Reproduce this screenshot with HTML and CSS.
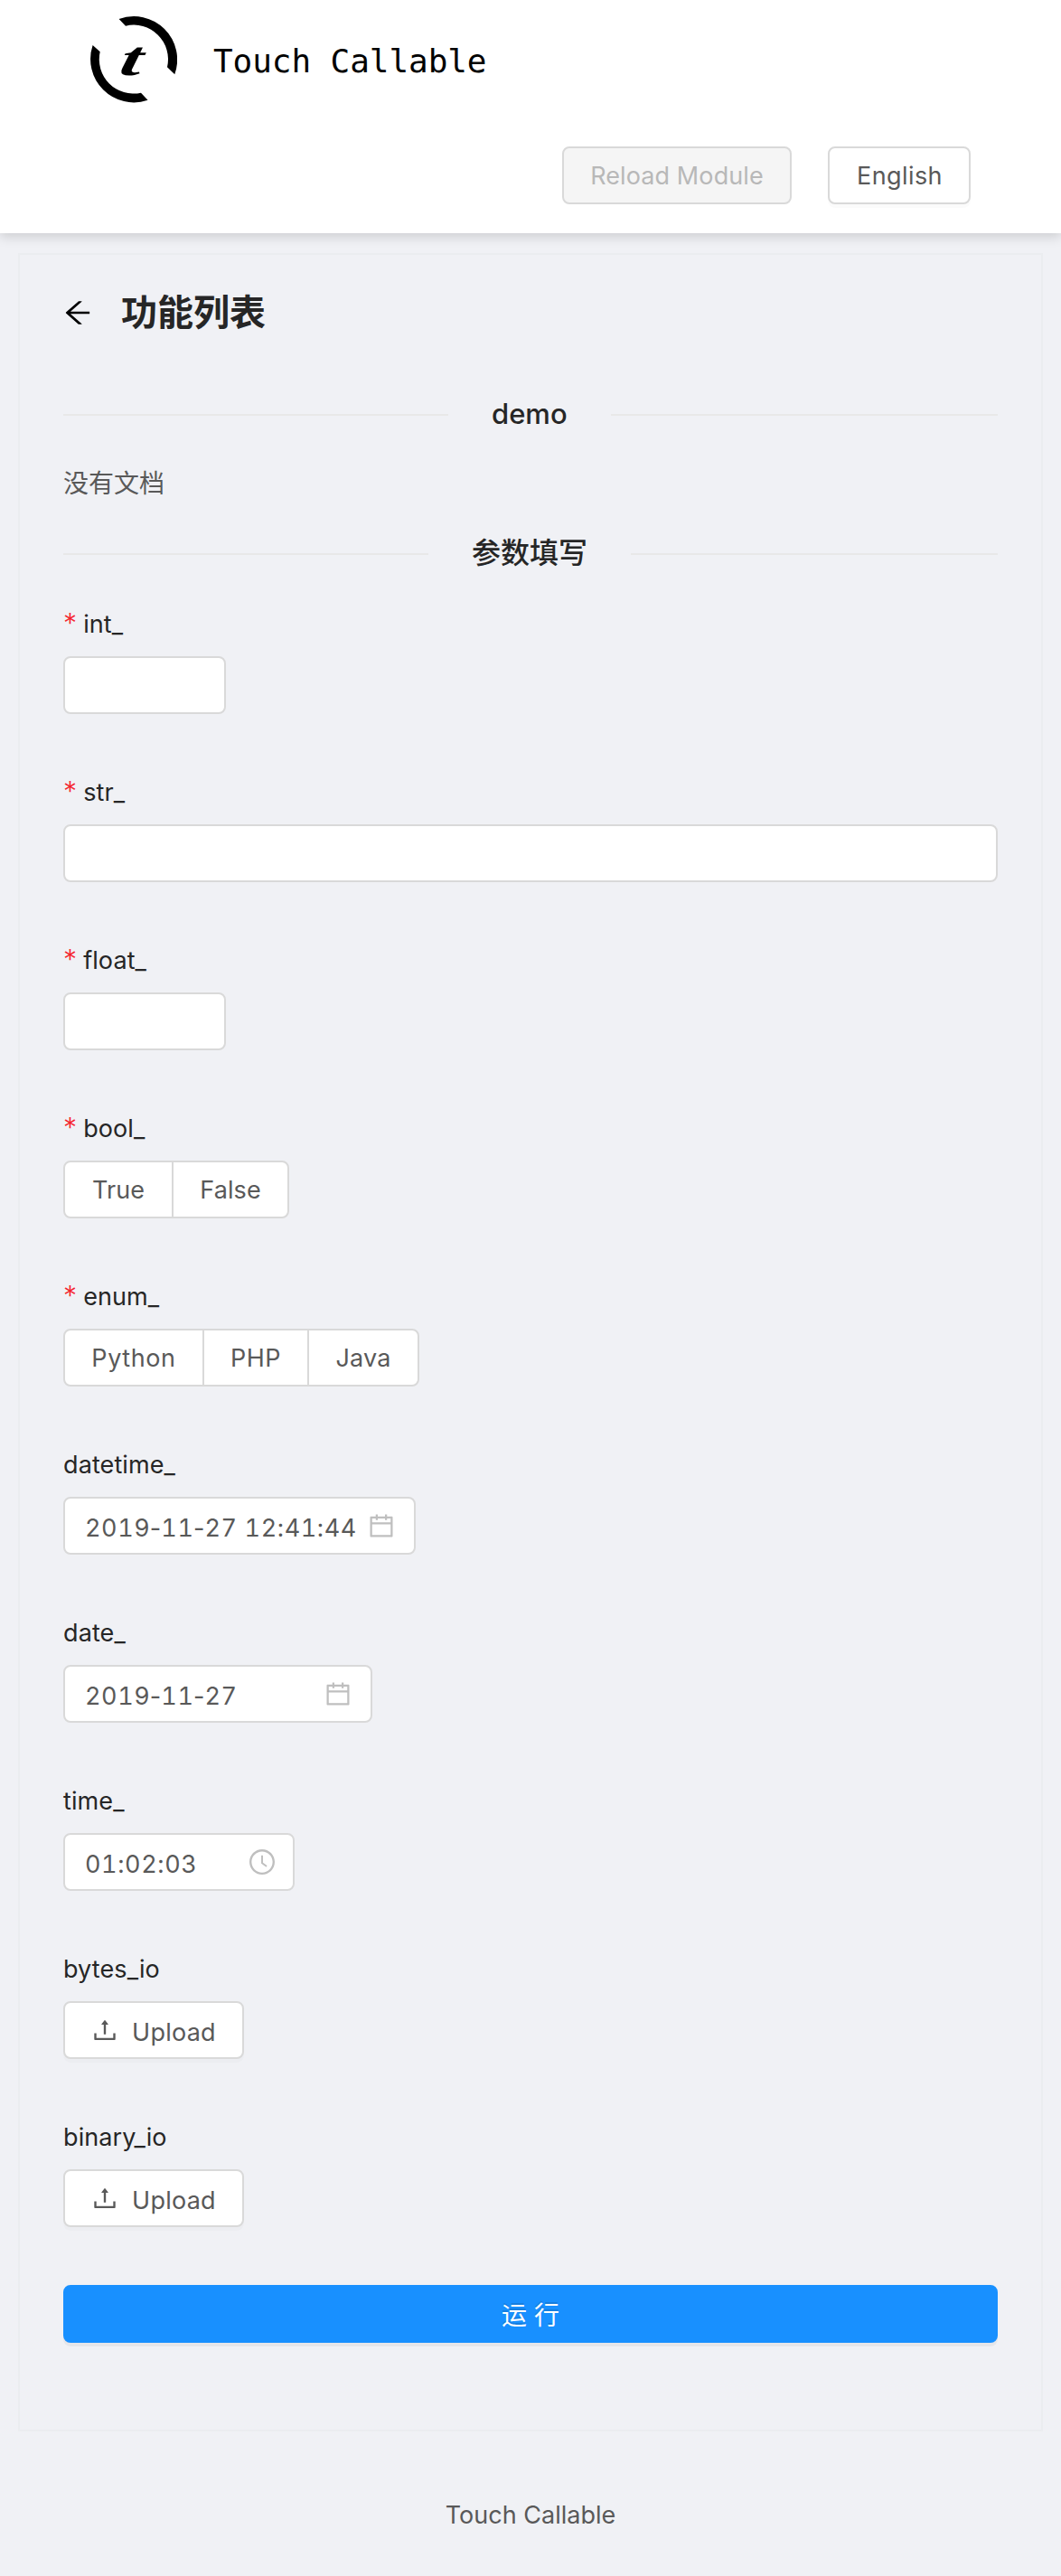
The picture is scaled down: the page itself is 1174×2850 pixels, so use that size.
FILE: index.html
```html
<!DOCTYPE html>
<html lang="zh">
<head>
<meta charset="utf-8">
<title>Touch Callable</title>
<link rel="stylesheet" href="styles.css">
</head>
<body>
<svg class="defs" width="0" height="0">
  <symbol id="calendar" viewBox="64 64 896 896"><path d="M880 184H712v-64c0-4.4-3.6-8-8-8h-56c-4.4 0-8 3.6-8 8v64H384v-64c0-4.4-3.6-8-8-8h-56c-4.4 0-8 3.6-8 8v64H144c-17.7 0-32 14.3-32 32v664c0 17.7 14.3 32 32 32h736c17.7 0 32-14.3 32-32V216c0-17.7-14.3-32-32-32zm-40 656H184V460h656v380zM184 392V256h128v48c0 4.4 3.6 8 8 8h56c4.4 0 8-3.6 8-8v-48h256v48c0 4.4 3.6 8 8 8h56c4.4 0 8-3.6 8-8v-48h128v136H184z"/></symbol>
  <symbol id="clock" viewBox="64 64 896 896"><path d="M512 64C264.6 64 64 264.6 64 512s200.6 448 448 448 448-200.6 448-448S759.4 64 512 64zm0 820c-205.4 0-372-166.6-372-372s166.6-372 372-372 372 166.6 372 372-166.6 372-372 372z"/><path d="M686.7 638.6L544.1 535.5V288c0-4.4-3.6-8-8-8H488c-4.4 0-8 3.6-8 8v275.4c0 2.6 1.2 5 3.3 6.5l165.4 120.6c3.6 2.6 8.6 1.8 11.2-1.7l28.6-39c2.6-3.7 1.8-8.7-1.8-11.2z"/></symbol>
  <symbol id="upload" viewBox="64 64 896 896"><path d="M400 317.7h73.9V656c0 4.4 3.6 8 8 8h60c4.4 0 8-3.6 8-8V317.7H624c6.7 0 10.4-7.7 6.3-12.9L518.3 163a8 8 0 0 0-12.6 0l-112 141.7c-4.1 5.3-.4 13 6.3 13zM878 626h-60c-4.4 0-8 3.6-8 8v154H214V634c0-4.4-3.6-8-8-8h-60c-4.4 0-8 3.6-8 8v198c0 17.7 14.3 32 32 32h684c17.7 0 32-14.3 32-32V634c0-4.4-3.6-8-8-8z"/></symbol>
</svg>

<header class="header">
  <div class="brand">
    <svg class="logo" width="96" height="96" viewBox="0 0 96 96">
      <path d="M31.6 3A48 48 0 0 1 93.3 64.3L85 56.3A38 38 0 0 0 39 10.7Z"/>
      <path d="M2.6 32A48 48 0 0 0 63.5 92.8L56 84.7A38 38 0 0 1 10.7 39.3Z"/>
      <text class="logo-letter" transform="translate(30.5 65) skewX(-12) scale(1.72 1.08)">t</text>
    </svg>
    <span class="brand-name">Touch Callable</span>
  </div>
  <div class="actions">
    <button class="btn reload" disabled>Reload Module</button>
    <button class="btn language">English</button>
  </div>
</header>

<main class="card">
  <div class="page-title">
    <svg class="back" width="32" height="32" viewBox="64 64 896 896"><path d="M872 474H286.9l350.2-304c5.6-4.9 2.2-14-5.2-14h-88.5c-3.9 0-7.6 1.4-10.5 3.9L155 487.8a31.96 31.96 0 0 0 0 48.3L535.1 866c1.5 1.3 3.3 2 5.2 2h91.5c7.4 0 10.8-9.2 5.2-14L286.9 550H872c4.4 0 8-3.6 8-8v-60c0-4.4-3.6-8-8-8z"/></svg>
    <h1>功能列表</h1>
  </div>
  <h2 class="divider name">demo</h2>
  <p class="doc">没有文档</p>
  <h2 class="divider params">参数填写</h2>

  <form class="form">
    <div class="item"><label class="required">int_</label><input class="control number"></div>
    <div class="item"><label class="required">str_</label><input class="control"></div>
    <div class="item"><label class="required">float_</label><input class="control number"></div>
    <div class="item"><label class="required">bool_</label>
      <div class="control radios bool"><span>True</span><span>False</span></div></div>
    <div class="item"><label class="required">enum_</label>
      <div class="control radios enum"><span>Python</span><span>PHP</span><span>Java</span></div></div>
    <div class="item"><label>datetime_</label>
      <div class="control picker datetime"><span>2019<i>-</i>11<i>-</i>27 12:41:44</span><svg class="icon"><use href="#calendar"/></svg></div></div>
    <div class="item"><label>date_</label>
      <div class="control picker date"><span>2019<i>-</i>11<i>-</i>27</span><svg class="icon"><use href="#calendar"/></svg></div></div>
    <div class="item"><label>time_</label>
      <div class="control picker time"><span>01:02:03</span><svg class="icon"><use href="#clock"/></svg></div></div>
    <div class="item"><label>bytes_io</label>
      <button type="button" class="btn upload"><svg class="icon"><use href="#upload"/></svg><span>Upload</span></button></div>
    <div class="item"><label>binary_io</label>
      <button type="button" class="btn upload"><svg class="icon"><use href="#upload"/></svg><span>Upload</span></button></div>
    <button type="button" class="btn run">运 行</button>
  </form>
</main>

<footer class="footer">Touch Callable</footer>
</body>
</html>
```
FILE: styles.css
```css
* { box-sizing: border-box; }
body {
  margin: 0;
  height: 2850px;
  background: #f0f1f5;
  color: #595959;
  font: 400 27px/42px Inter, "Noto Sans CJK SC", sans-serif;
  letter-spacing: .1px;
}
.defs { position: absolute; }
h1, h2, p { margin: 0; }
svg { display: block; flex: none; fill: currentColor; }

.header {
  height: 258px;
  padding: 18px 100px 0;
  background: #fff;
  box-shadow: 0 4px 12px rgba(0, 0, 0, .15);
}
.brand { display: flex; align-items: center; gap: 40px; height: 96px; color: #000; }
.brand-name {
  font: 36px/48px "DejaVu Sans Mono", monospace;
  letter-spacing: -.07px;
  padding-top: 3px;
}
.logo-letter { font: italic bold 50px "Liberation Serif", serif; letter-spacing: 0; }
.actions { display: flex; justify-content: flex-end; gap: 40px; padding-top: 48px; }

.btn {
  display: flex;
  align-items: center;
  justify-content: center;
  height: 64px;
  padding: 0;
  border: 2px solid #d9d9d9;
  border-radius: 8px;
  background: #fff;
  color: #595959;
  font: inherit;
  letter-spacing: inherit;
  box-shadow: 0 4px 0 rgba(0, 0, 0, .016);
}
.reload { width: 254px; background: #f5f5f5; color: #b8b8b8; box-shadow: none; padding-top: 1px; }
.language { width: 158px; padding: 1px 0 0 1px; letter-spacing: .4px; }

.card {
  height: 2410px;
  margin: 22px 20px 0;
  padding: 32px 48px 0;
  border: 2px solid #ebedf0;
}
.page-title { display: flex; align-items: center; gap: 32px; height: 64px; color: #000; }
.page-title h1 { font-size: 40px; line-height: 64px; font-weight: 700; letter-spacing: 0; color: #262626; }

.divider {
  display: flex;
  align-items: center;
  gap: 48px;
  height: 48px;
  color: #262626;
  font-size: 32px;
  font-weight: 500;
  letter-spacing: 0;
}
.divider::before, .divider::after { content: ""; flex: 1; height: 2px; margin-top: 2px; background: #e8e8e8; }
.divider::before { flex: none; }
.name { margin-top: 56px; font-size: 31px; }
.name::before { width: 426px; }
.doc { margin-top: 32px; font-size: 28px; letter-spacing: 0; }
.params { margin-top: 32px; }
.params::before { width: 404px; }

.form { padding-top: 32px; }
.item { margin-bottom: 64px; }
.item label { display: block; height: 42px; margin-bottom: 16px; padding-top: 2px; color: #262626; }
.required::before { content: "*"; color: #f5222d; font-size: 30px; font-weight: 300; line-height: 1; margin-right: 7px; }
.control {
  display: flex;
  width: 100%;
  height: 64px;
  border: 2px solid #d9d9d9;
  border-radius: 8px;
  background: #fff;
}
.number { width: 180px; }

.radios span { display: flex; align-items: center; justify-content: center; flex: 1; padding-top: 1px; }
.radios span + span { border-left: 2px solid #d9d9d9; }
.bool { width: 250px; }
.bool span:first-child { flex: 0 0 118px; }
.enum { width: 394px; }
.enum span:nth-child(1) { flex: 0 0 152px; letter-spacing: .6px; }
.enum span:nth-child(2) { flex: 0 0 116px; letter-spacing: .5px; }

.picker { align-items: center; justify-content: space-between; padding: 0 22px; font-variant-numeric: tabular-nums; letter-spacing: .6px; }
.picker span { padding-top: 5px; white-space: nowrap; }
.picker i { font-style: normal; margin: 0 -3.1px; }
.icon { width: 28px; height: 28px; }
.picker .icon { color: #bfbfbf; }
.datetime { width: 390px; }
.date { width: 342px; }
.time { width: 256px; padding-right: 20px; }

.upload { width: 200px; gap: 16px; padding-left: 1px; letter-spacing: .25px; }
.upload span { padding-top: 5px; }
.run {
  width: 100%;
  padding-top: 4px;
  border-color: #1890ff;
  background: #1890ff;
  color: #fff;
  font-size: 28px;
  text-shadow: 0 -2px 0 rgba(0, 0, 0, .12);
  box-shadow: 0 4px 0 rgba(0, 0, 0, .045);
}
.footer { margin-top: 72px; text-align: center; letter-spacing: 0; }
```
